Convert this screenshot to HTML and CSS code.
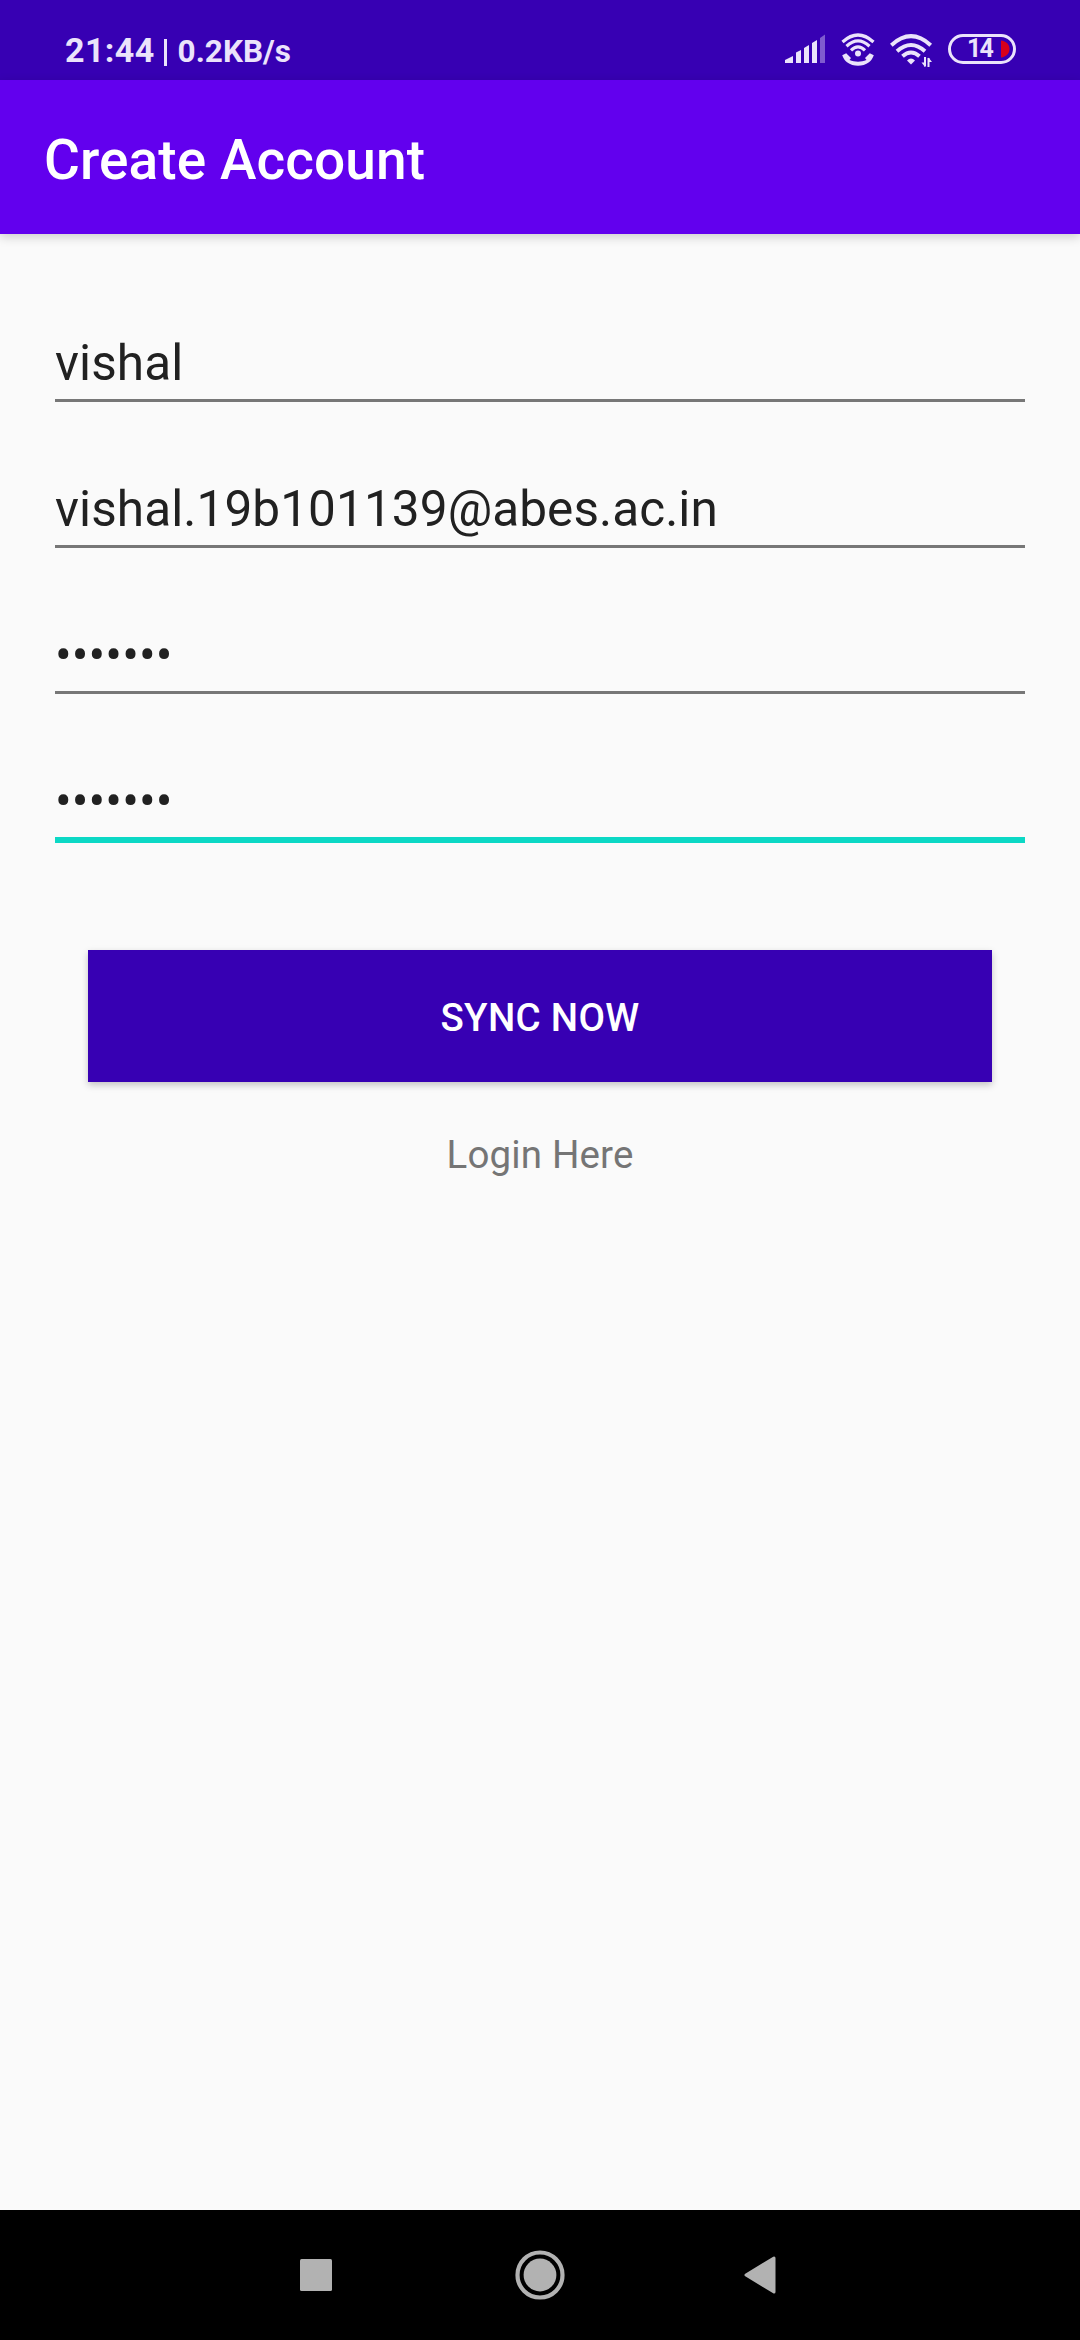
FILE: index.html
```html
<!DOCTYPE html>
<html lang="en">
<head>
<meta charset="utf-8">
<title>Create Account</title>
<link rel="stylesheet" href="styles.css">
</head>
<body>
<div class="screen">
  <div class="status-bar">
    <div class="status-left"><span class="clock">21:44</span><span class="divider"></span><span class="speed">0.2KB/s</span></div>
    <div class="status-icons">
      <svg class="signal" width="41" height="30" viewBox="0 0 41 30" fill="currentColor">
        <path d="M0 29V26L8 22V29ZM11 29V18.5L16 16V29ZM19 29V14L24 11V29ZM27 29V9L32 6V29Z"/>
        <path d="M35 29V4L40 0.5V29Z" opacity=".4"/>
      </svg>
      <svg class="wifi-call" width="34" height="34" viewBox="0 0 34 34" fill="none" stroke="currentColor" stroke-width="3.200">
        <path d="M1.5 9Q17 -5 32.5 9M5.5 13.2Q17 2.7 28.5 13.2M10 17.3Q17 10.5 24 17.3"/>
        <circle cx="17" cy="20.5" r="3" fill="currentColor" stroke="none"/>
        <path d="M5.2 20.2L1.2 22.3C2.5 25.5 4 27.8 6 29.3C12.5 34 21.5 34 28 29.3C30 27.8 31.5 25.5 32.8 22.3L28.8 20.2L24 25L25.5 27C20 29.3 14 29.3 8.5 27L10 25Z" fill="currentColor" stroke="none"/>
      </svg>
      <svg class="wifi" width="43" height="34" viewBox="0 0 43 34" fill="none" stroke="currentColor" stroke-width="4">
        <path d="M1.3 11.2Q21 -6.8 40.7 11.2M7 17.2Q21 4.8 35 17.2M12.5 22.2Q21 14.8 29.5 22.2"/>
        <path d="M17 26.5Q21 22.500 25 26.5L21 30.5Z" fill="currentColor" stroke="none"/>
        <path d="M35 23V32.5M38.5 24V33" stroke-width="2"/>
        <path d="M31.5 28.5H35V33ZM42 28H38.5V23.5Z" fill="currentColor" stroke="none"/>
      </svg>
      <div class="battery"><span class="battery-text">14</span>
        <svg class="battery-level" width="9" height="18" viewBox="0 0 9 18"><path d="M0 0.5C5 1 8.5 4.5 8.5 9S5 17 0 17.5Z" fill="#d8001b"/></svg>
      </div>
    </div>
  </div>
  <header class="app-bar"><h1 class="title">Create Account</h1></header>
  <main class="form">
    <div class="field">vishal</div>
    <div class="field">vishal.19b101139@abes.ac.in</div>
    <div class="field">•••••••</div>
    <div class="field field-active">•••••••</div>
    <button class="submit">SYNC NOW</button>
    <a class="login">Login Here</a>
  </main>
  <nav class="nav-bar">
    <svg width="32" height="32" viewBox="0 0 32 32"><rect width="32" height="32" rx="1.5" fill="#b2b2b2"/></svg>
    <svg class="home" width="50" height="50" viewBox="0 0 50 50"><circle cx="25" cy="25" r="22.5" fill="none" stroke="#b2b2b2" stroke-width="4.2"/><circle cx="25" cy="25" r="16.4" fill="#b2b2b2"/></svg>
    <svg class="back" width="32" height="38" viewBox="0 0 32 38"><path d="M2 19L30 2V36Z" fill="#b2b2b2" stroke="#b2b2b2" stroke-width="3" stroke-linejoin="round"/></svg>
  </nav>
</div>
</body>
</html>
```

FILE: styles.css
```css
* { box-sizing: border-box; }
body { margin: 0; font-family: Roboto, "Liberation Sans", sans-serif; }
.screen { width: 1080px; height: 2340px; display: flex; flex-direction: column; background: #fafafa; overflow: hidden; }
.status-bar { height: 80px; flex: none; background: #3700b3; color: #ebe3fb; display: flex; justify-content: space-between; padding: 0 64px 0 65px; }
.status-left { display: flex; align-items: baseline; padding-top: 30px; line-height: 40px; font-weight: 700; }
.clock { font-size: 34px; letter-spacing: .4px; }
.divider { width: 3px; height: 27px; margin: 0 11px 0 9px; background: currentColor; transform: translateY(4px); }
.speed { font-size: 31.5px; }
.status-icons { display: flex; align-items: flex-start; padding-top: 34px; }
.wifi-call { margin: -1px 0 0 15px; }
.wifi { margin: 0 0 0 15px; }
.battery { width: 68px; height: 30px; margin-left: 15px; border: 3px solid currentColor; border-radius: 15px; display: flex; align-items: center; justify-content: flex-end; padding-right: 3px; }
.battery-text { font-size: 25px; line-height: 24px; font-weight: 700; letter-spacing: -1.8px; margin-right: 9px; }
.app-bar { height: 154px; flex: none; background: #6200ee; padding: 0 44px; display: flex; align-items: center; box-shadow: 0 3px 10px rgba(0, 0, 0, .18); }
.title { margin: 5px 0 0; color: #fff; font-size: 55px; line-height: 66px; font-weight: 500; letter-spacing: .08px; }
.form { flex: 1; padding: 89px 55px 0; display: flex; flex-direction: column; }
.field { height: 79px; margin-bottom: 67px; color: #212121; font-size: 49.5px; line-height: 80px; letter-spacing: .09px; border-bottom: 3px solid #777; }
.field-active { height: 82px; border-bottom: 6px solid #0cd8c5; }
.submit { height: 132px; margin: 40px 33px 0; padding: 4px 0 0; border: 0; background: #3700b3; color: #fff; font: 500 38.5px/46px Roboto, sans-serif; letter-spacing: .3px; box-shadow: 0 3px 7px rgba(0, 0, 0, .22); }
.login { margin-top: 50px; text-align: center; color: #757575; font-size: 38.5px; line-height: 46px; letter-spacing: .15px; }
.nav-bar { height: 130px; flex: none; background: #000; display: grid; grid-template-columns: 32px 50px 32px; column-gap: 183px; align-items: center; padding: 0 0 0 300px; }
.nav-bar .back { margin-left: -4px; }
```
